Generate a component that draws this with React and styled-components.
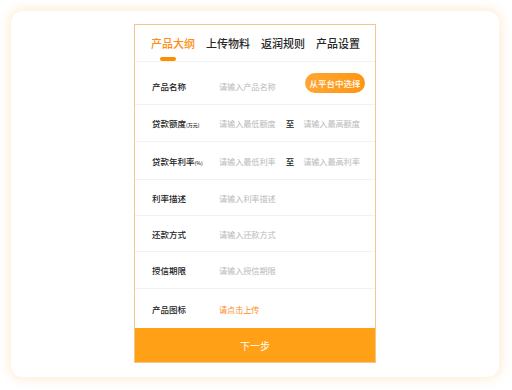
import styled, { createGlobalStyle } from "styled-components";

const GlobalStyle = createGlobalStyle`
  html, body {
    margin: 0;
    padding: 0;
    background: #ffffff;
    font-family: "Noto Sans CJK SC", "Noto Sans", sans-serif;
  }
`

const Page = styled.div`
  width: 512px;
  height: 390px;
  padding: 11px 13px 13px 11px;
  box-sizing: border-box;
`

const Card = styled.div`
  width: 488px;
  height: 366px;
  box-sizing: border-box;
  padding-top: 13px;
  background: #ffffff;
  border-radius: 12px;
  box-shadow: 0 0 10px 3px rgba(255, 176, 90, 0.22);
  display: flex;
  justify-content: center;
  align-items: flex-start;
`

const Panel = styled.div`
  width: 242px;
  box-sizing: border-box;
  border: 1px solid #f0c88c;
  background: #ffffff;
  display: flex;
  flex-direction: column;
`

const Tabs = styled.div`
  display: flex;
  align-items: flex-start;
  padding: 11px 0 0 16px;
  height: 25px;
  gap: 11px;
  border-bottom: 1px solid #f2f2f2;
`

const Tab = styled.div`
  position: relative;
  font-size: 11px;
  line-height: 15px;
  font-weight: 500;
  color: ${props => props.active ? "#ff8d0f" : "#262626"};

  &::after {
    content: "";
    display: ${props => props.active ? "block" : "none"};
    position: absolute;
    left: 9px;
    top: 21px;
    width: 16px;
    height: 4px;
    border-radius: 2px;
    background: #ff8d00;
  }
`

const Row = styled.div`
  display: flex;
  align-items: center;
  height: ${props => props.h || 37}px;
  padding: ${props => props.top || 0}px 10px 0 17px;
  box-sizing: border-box;
  border-bottom: ${props => props.last ? "none" : "1px solid #f2f2f2"};
`

const Label = styled.div`
  width: 67px;
  flex-shrink: 0;
  font-size: 8.5px;
  font-weight: 500;
  color: #222222;
  white-space: nowrap;
`

const Unit = styled.span`
  font-size: 5px;
`

const Placeholder = styled.div`
  font-size: 8.2px;
  color: ${props => props.accent ? "#ff8a1f" : "#b9b9b9"};
  white-space: nowrap;
  letter-spacing: -0.1px;
`

const To = styled.div`
  font-size: 8.5px;
  font-weight: 500;
  color: #222222;
  margin: 0 9px 0 10px;
`

const PickButton = styled.button`
  margin-left: auto;
  margin-top: -6px;
  width: 60px;
  height: 20px;
  border: none;
  border-radius: 10px;
  padding: 0;
  background: linear-gradient(90deg, #ffa733, #ff9412);
  color: #ffffff;
  font-family: inherit;
  font-size: 8.5px;
  font-weight: 500;
`

const NextButton = styled.div`
  height: 34px;
  background: #ffa016;
  color: #ffffff;
  font-size: 10px;
  display: flex;
  align-items: center;
  justify-content: center;
`

const tabs = ["产品大纲", "上传物料", "返润规则", "产品设置"]

const App = () => {
  return (
    <Page>
      <GlobalStyle />
      <Card>
        <Panel>
          <Tabs>
            {tabs.map((t, i) => (
              <Tab key={t} active={i === 0}>{t}</Tab>
            ))}
          </Tabs>
          <Row h={43} top={6}>
            <Label>产品名称</Label>
            <Placeholder>请输入产品名称</Placeholder>
            <PickButton>从平台中选择</PickButton>
          </Row>
          <Row>
            <Label>贷款额度<Unit>(万元)</Unit></Label>
            <Placeholder>请输入最低额度</Placeholder>
            <To>至</To>
            <Placeholder>请输入最高额度</Placeholder>
          </Row>
          <Row h={38}>
            <Label>贷款年利率<Unit>(%)</Unit></Label>
            <Placeholder>请输入最低利率</Placeholder>
            <To>至</To>
            <Placeholder>请输入最高利率</Placeholder>
          </Row>
          <Row h={36}>
            <Label>利率描述</Label>
            <Placeholder>请输入利率描述</Placeholder>
          </Row>
          <Row h={36}>
            <Label>还款方式</Label>
            <Placeholder>请输入还款方式</Placeholder>
          </Row>
          <Row>
            <Label>授信期限</Label>
            <Placeholder>请输入授信期限</Placeholder>
          </Row>
          <Row h={39} last>
            <Label>产品图标</Label>
            <Placeholder accent>请点击上传</Placeholder>
          </Row>
          <NextButton>下一步</NextButton>
        </Panel>
      </Card>
    </Page>
  )
}

export default App
